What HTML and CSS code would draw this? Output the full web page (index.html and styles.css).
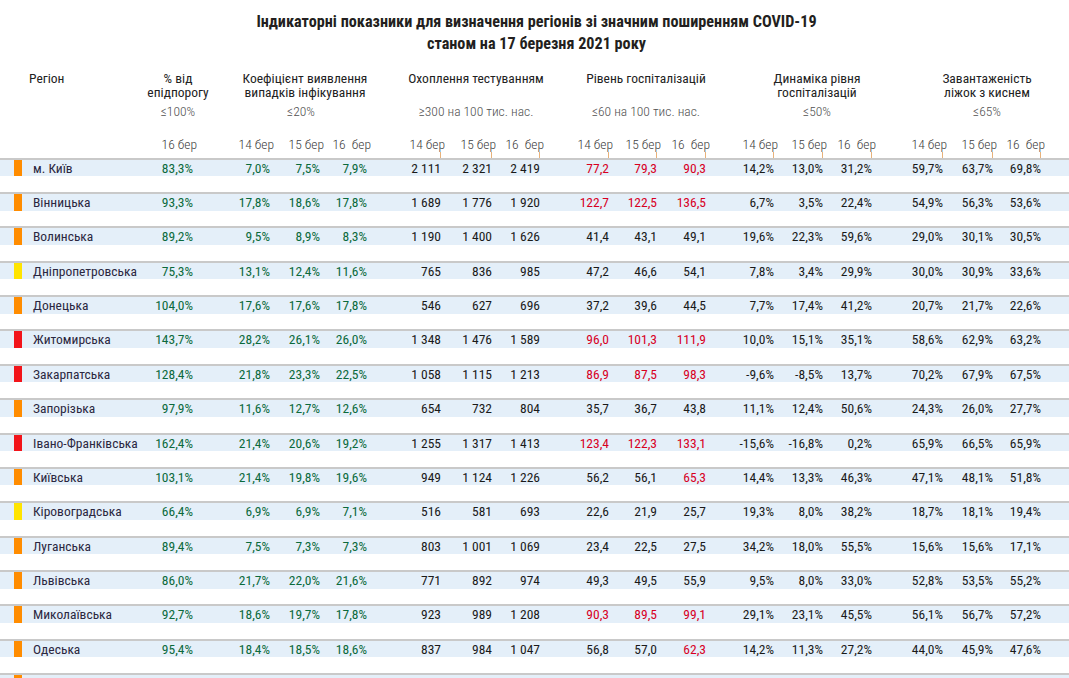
FILE: index.html
```html
<!DOCTYPE html>
<html lang="uk">
<head>
<meta charset="utf-8">
<title>Індикаторні показники</title>
<link rel="stylesheet" href="styles.css">
</head>
<body>
<div class="page">
  <header class="title">
    <div>Індикаторні показники для визначення регіонів зі значним поширенням COVID-19</div>
    <div>станом на 17 березня 2021 року</div>
  </header>

  <div class="head">
    <div class="h h-reg"><div class="ht">Регіон</div></div>
    <div class="h"><div class="ht">% від<br>епідпорогу</div><div class="th">≤100%</div></div>
    <div class="h h-koef"><div class="ht">Коефіцієнт виявлення<br>випадків інфікування</div><div class="th th-koef">≤20%</div></div>
    <div class="h h-test"><div class="ht">Охоплення тестуванням</div><div class="th">≥300 на 100 тис. нас.</div></div>
    <div class="h h-hosp"><div class="ht">Рівень госпіталізацій</div><div class="th">≤60 на 100 тис. нас.</div></div>
    <div class="h h-dyn"><div class="ht">Динаміка рівня<br>госпіталізацій</div><div class="th">≤50%</div></div>
    <div class="h h-beds"><div class="ht">Завантаженість<br>ліжок з киснем</div><div class="th">≤65%</div></div>
  </div>

  <div class="dates cols">
    <div></div>
    <div class="d"><span>16 бер</span></div>
    <div class="d"><span>14 бер</span></div>
    <div class="d"><span>15 бер</span></div>
    <div class="d"><span>16  бер</span></div>
    <div class="d"><span>14 бер</span><i class="tick"></i></div>
    <div class="d"><span>15 бер</span><i class="tick"></i></div>
    <div class="d"><span>16  бер</span><i class="tick"></i></div>
    <div class="d"><span>14 бер</span><i class="tick"></i></div>
    <div class="d"><span>15 бер</span><i class="tick"></i></div>
    <div class="d"><span>16  бер</span><i class="tick"></i></div>
    <div class="d"><span>14 бер</span><i class="tick"></i></div>
    <div class="d"><span>15 бер</span><i class="tick"></i></div>
    <div class="d"><span>16  бер</span><i class="tick"></i></div>
    <div class="d"><span>14 бер</span><i class="tick"></i></div>
    <div class="d"><span>15 бер</span><i class="tick"></i></div>
    <div class="d"><span>16  бер</span><i class="tick"></i></div>
    <div></div>
  </div>

  <div class="rows">
    <div class="row"><div class="band cols">
      <div class="reg"><span class="bar o"></span><span class="nm">м. Київ</span></div>
      <div class="c g">83,3%</div>
      <div class="c g">7,0%</div><div class="c g">7,5%</div><div class="c g">7,9%</div>
      <div class="c">2 111</div><div class="c">2 321</div><div class="c">2 419</div>
      <div class="c r">77,2</div><div class="c r">79,3</div><div class="c r">90,3</div>
      <div class="c">14,2%</div><div class="c">13,0%</div><div class="c">31,2%</div>
      <div class="c">59,7%</div><div class="c">63,7%</div><div class="c">69,8%</div>
      <div></div>
    </div></div>

    <div class="row"><div class="band cols">
      <div class="reg"><span class="bar o"></span><span class="nm">Вінницька</span></div>
      <div class="c g">93,3%</div>
      <div class="c g">17,8%</div><div class="c g">18,6%</div><div class="c g">17,8%</div>
      <div class="c">1 689</div><div class="c">1 776</div><div class="c">1 920</div>
      <div class="c r">122,7</div><div class="c r">122,5</div><div class="c r">136,5</div>
      <div class="c">6,7%</div><div class="c">3,5%</div><div class="c">22,4%</div>
      <div class="c">54,9%</div><div class="c">56,3%</div><div class="c">53,6%</div>
      <div></div>
    </div></div>

    <div class="row"><div class="band cols">
      <div class="reg"><span class="bar o"></span><span class="nm">Волинська</span></div>
      <div class="c g">89,2%</div>
      <div class="c g">9,5%</div><div class="c g">8,9%</div><div class="c g">8,3%</div>
      <div class="c">1 190</div><div class="c">1 400</div><div class="c">1 626</div>
      <div class="c">41,4</div><div class="c">43,1</div><div class="c">49,1</div>
      <div class="c">19,6%</div><div class="c">22,3%</div><div class="c">59,6%</div>
      <div class="c">29,0%</div><div class="c">30,1%</div><div class="c">30,5%</div>
      <div></div>
    </div></div>

    <div class="row"><div class="band cols">
      <div class="reg"><span class="bar y"></span><span class="nm">Дніпропетровська</span></div>
      <div class="c g">75,3%</div>
      <div class="c g">13,1%</div><div class="c g">12,4%</div><div class="c g">11,6%</div>
      <div class="c">765</div><div class="c">836</div><div class="c">985</div>
      <div class="c">47,2</div><div class="c">46,6</div><div class="c">54,1</div>
      <div class="c">7,8%</div><div class="c">3,4%</div><div class="c">29,9%</div>
      <div class="c">30,0%</div><div class="c">30,9%</div><div class="c">33,6%</div>
      <div></div>
    </div></div>

    <div class="row"><div class="band cols">
      <div class="reg"><span class="bar o"></span><span class="nm">Донецька</span></div>
      <div class="c g">104,0%</div>
      <div class="c g">17,6%</div><div class="c g">17,6%</div><div class="c g">17,8%</div>
      <div class="c">546</div><div class="c">627</div><div class="c">696</div>
      <div class="c">37,2</div><div class="c">39,6</div><div class="c">44,5</div>
      <div class="c">7,7%</div><div class="c">17,4%</div><div class="c">41,2%</div>
      <div class="c">20,7%</div><div class="c">21,7%</div><div class="c">22,6%</div>
      <div></div>
    </div></div>

    <div class="row"><div class="band cols">
      <div class="reg"><span class="bar rd"></span><span class="nm">Житомирська</span></div>
      <div class="c g">143,7%</div>
      <div class="c g">28,2%</div><div class="c g">26,1%</div><div class="c g">26,0%</div>
      <div class="c">1 348</div><div class="c">1 476</div><div class="c">1 589</div>
      <div class="c r">96,0</div><div class="c r">101,3</div><div class="c r">111,9</div>
      <div class="c">10,0%</div><div class="c">15,1%</div><div class="c">35,1%</div>
      <div class="c">58,6%</div><div class="c">62,9%</div><div class="c">63,2%</div>
      <div></div>
    </div></div>

    <div class="row"><div class="band cols">
      <div class="reg"><span class="bar rd"></span><span class="nm">Закарпатська</span></div>
      <div class="c g">128,4%</div>
      <div class="c g">21,8%</div><div class="c g">23,3%</div><div class="c g">22,5%</div>
      <div class="c">1 058</div><div class="c">1 115</div><div class="c">1 213</div>
      <div class="c r">86,9</div><div class="c r">87,5</div><div class="c r">98,3</div>
      <div class="c">-9,6%</div><div class="c">-8,5%</div><div class="c">13,7%</div>
      <div class="c">70,2%</div><div class="c">67,9%</div><div class="c">67,5%</div>
      <div></div>
    </div></div>

    <div class="row"><div class="band cols">
      <div class="reg"><span class="bar o"></span><span class="nm">Запорізька</span></div>
      <div class="c g">97,9%</div>
      <div class="c g">11,6%</div><div class="c g">12,7%</div><div class="c g">12,6%</div>
      <div class="c">654</div><div class="c">732</div><div class="c">804</div>
      <div class="c">35,7</div><div class="c">36,7</div><div class="c">43,8</div>
      <div class="c">11,1%</div><div class="c">12,4%</div><div class="c">50,6%</div>
      <div class="c">24,3%</div><div class="c">26,0%</div><div class="c">27,7%</div>
      <div></div>
    </div></div>

    <div class="row"><div class="band cols">
      <div class="reg"><span class="bar rd"></span><span class="nm">Івано-Франківська</span></div>
      <div class="c g">162,4%</div>
      <div class="c g">21,4%</div><div class="c g">20,6%</div><div class="c g">19,2%</div>
      <div class="c">1 255</div><div class="c">1 317</div><div class="c">1 413</div>
      <div class="c r">123,4</div><div class="c r">122,3</div><div class="c r">133,1</div>
      <div class="c">-15,6%</div><div class="c">-16,8%</div><div class="c">0,2%</div>
      <div class="c">65,9%</div><div class="c">66,5%</div><div class="c">65,9%</div>
      <div></div>
    </div></div>

    <div class="row"><div class="band cols">
      <div class="reg"><span class="bar o"></span><span class="nm">Київська</span></div>
      <div class="c g">103,1%</div>
      <div class="c g">21,4%</div><div class="c g">19,8%</div><div class="c g">19,6%</div>
      <div class="c">949</div><div class="c">1 124</div><div class="c">1 226</div>
      <div class="c">56,2</div><div class="c">56,1</div><div class="c r">65,3</div>
      <div class="c">14,4%</div><div class="c">13,3%</div><div class="c">46,3%</div>
      <div class="c">47,1%</div><div class="c">48,1%</div><div class="c">51,8%</div>
      <div></div>
    </div></div>

    <div class="row"><div class="band cols">
      <div class="reg"><span class="bar y"></span><span class="nm">Кіровоградська</span></div>
      <div class="c g">66,4%</div>
      <div class="c g">6,9%</div><div class="c g">6,9%</div><div class="c g">7,1%</div>
      <div class="c">516</div><div class="c">581</div><div class="c">693</div>
      <div class="c">22,6</div><div class="c">21,9</div><div class="c">25,7</div>
      <div class="c">19,3%</div><div class="c">8,0%</div><div class="c">38,2%</div>
      <div class="c">18,7%</div><div class="c">18,1%</div><div class="c">19,4%</div>
      <div></div>
    </div></div>

    <div class="row"><div class="band cols">
      <div class="reg"><span class="bar o"></span><span class="nm">Луганська</span></div>
      <div class="c g">89,4%</div>
      <div class="c g">7,5%</div><div class="c g">7,3%</div><div class="c g">7,3%</div>
      <div class="c">803</div><div class="c">1 001</div><div class="c">1 069</div>
      <div class="c">23,4</div><div class="c">22,5</div><div class="c">27,5</div>
      <div class="c">34,2%</div><div class="c">18,0%</div><div class="c">55,5%</div>
      <div class="c">15,6%</div><div class="c">15,6%</div><div class="c">17,1%</div>
      <div></div>
    </div></div>

    <div class="row"><div class="band cols">
      <div class="reg"><span class="bar o"></span><span class="nm">Львівська</span></div>
      <div class="c g">86,0%</div>
      <div class="c g">21,7%</div><div class="c g">22,0%</div><div class="c g">21,6%</div>
      <div class="c">771</div><div class="c">892</div><div class="c">974</div>
      <div class="c">49,3</div><div class="c">49,5</div><div class="c">55,9</div>
      <div class="c">9,5%</div><div class="c">8,0%</div><div class="c">33,0%</div>
      <div class="c">52,8%</div><div class="c">53,5%</div><div class="c">55,2%</div>
      <div></div>
    </div></div>

    <div class="row"><div class="band cols">
      <div class="reg"><span class="bar o"></span><span class="nm">Миколаївська</span></div>
      <div class="c g">92,7%</div>
      <div class="c g">18,6%</div><div class="c g">19,7%</div><div class="c g">17,8%</div>
      <div class="c">923</div><div class="c">989</div><div class="c">1 208</div>
      <div class="c r">90,3</div><div class="c r">89,5</div><div class="c r">99,1</div>
      <div class="c">29,1%</div><div class="c">23,1%</div><div class="c">45,5%</div>
      <div class="c">56,1%</div><div class="c">56,7%</div><div class="c">57,2%</div>
      <div></div>
    </div></div>

    <div class="row"><div class="band cols">
      <div class="reg"><span class="bar o"></span><span class="nm">Одеська</span></div>
      <div class="c g">95,4%</div>
      <div class="c g">18,4%</div><div class="c g">18,5%</div><div class="c g">18,6%</div>
      <div class="c">837</div><div class="c">984</div><div class="c">1 047</div>
      <div class="c">56,8</div><div class="c">57,0</div><div class="c r">62,3</div>
      <div class="c">14,2%</div><div class="c">11,3%</div><div class="c">27,2%</div>
      <div class="c">44,0%</div><div class="c">45,9%</div><div class="c">47,6%</div>
      <div></div>
    </div></div>

    <div class="row"><div class="band cols">
      <div class="reg"><span class="bar o"></span><span class="nm">Полтавська</span></div>
    </div></div>
  </div>
</div>
</body>
</html>
```
FILE: styles.css
```css
html, body {
  margin: 0;
  padding: 0;
  background: #ffffff;
}

body {
  font-family: Roboto, "Liberation Sans", sans-serif;
  font-stretch: 75%;
  font-size: 13.5px;
  color: #1e1e1e;
}

.page {
  width: 1069px;
  height: 678px;
  overflow: hidden;
}

/* ---------- title ---------- */
.title {
  padding-top: 11px;
  padding-left: 4px;
  text-align: center;
  font-weight: 700;
  font-size: 16.2px;
  line-height: 22px;
  color: #231f20;
}

/* ---------- group headers ---------- */
.head {
  margin-top: 16px;
  display: grid;
  grid-template-columns: 140px 76px 178px 164px 176px 166px 169px;
  color: #222222;
}

.h {
  display: flex;
  flex-direction: column;
  align-items: center;
  text-align: center;
  white-space: nowrap;
}

.h-reg {
  align-items: flex-start;
  padding-left: 29px;
}

.h-beds {
  padding-left: 5px;
}

.ht {
  min-height: 28px;
  line-height: 14px;
}

.th {
  margin-top: 5px;
  line-height: 14px;
  color: #505050;
  font-weight: 300;
}

.th-koef {
  margin-right: 8px;
}

/* ---------- shared column grid ---------- */
.cols {
  display: grid;
  grid-template-columns:
    135px
    58px
    77px 50px 47px
    74px 51px 48px
    69px 48px 49px
    68px 49px 49px
    71px 50px 48px
    1fr;
}

/* ---------- dates ---------- */
.dates {
  margin-top: 19px;
  height: 20.7px;
}

.d {
  display: flex;
  flex-direction: column;
  align-items: flex-end;
  color: #404040;
  font-weight: 300;
}

.d span {
  display: block;
  line-height: 14px;
  margin-right: -4px;
  white-space: pre;
}

.tick {
  display: block;
  margin-top: auto;
  width: 1px;
  height: 6px;
  background: #e8b27a;
}

/* ---------- rows ---------- */
.row {
  box-sizing: border-box;
  height: 34.37px;
  border-top: 2px solid #c9c9c9;
}

.band {
  height: 16.5px;
  background: #e4eff9;
  align-items: center;
}

.reg {
  display: flex;
  align-items: stretch;
  height: 100%;
  min-width: 0;
}

.bar {
  flex: 0 0 8px;
  margin-left: 14px;
  height: 100%;
}

.bar.o { background: #ff8c00; }
.bar.y { background: #ffe400; }
.bar.rd { background: #f2141a; }

.nm {
  flex: 0 0 auto;
  margin-left: 11px;
  line-height: 16.5px;
  color: #2b2740;
  white-space: nowrap;
}

.c {
  text-align: right;
  white-space: nowrap;
  line-height: 16.5px;
  color: #1a1a1a;
}

.c.g { color: #0b6a3c; }
.c.r { color: #d8001f; }
```
